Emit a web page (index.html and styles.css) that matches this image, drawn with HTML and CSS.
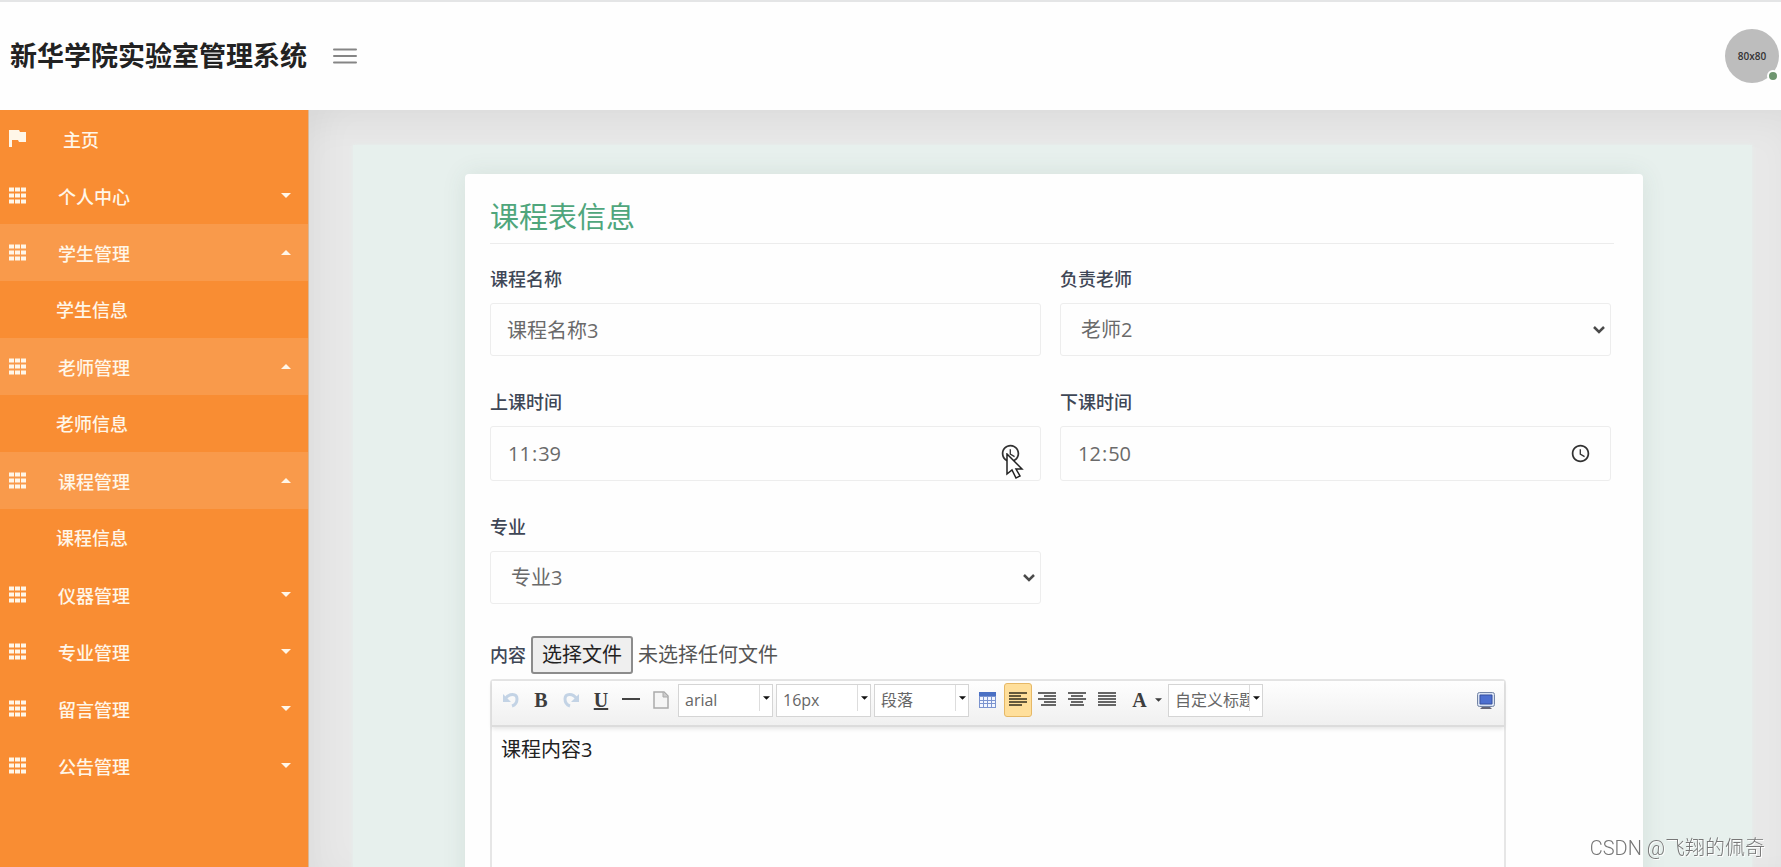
FILE: index.html
```html
<!DOCTYPE html>
<html lang="zh-CN">
<head>
<meta charset="utf-8">
<title>新华学院实验室管理系统</title>
<link rel="stylesheet" href="styles.css">
</head>
<body>
<svg class="sprite" aria-hidden="true">
  <symbol id="grid" viewBox="0 0 17 16"><path d="M0 0h5v4H0zM6 0h5v4H6zM12 0h5v4h-5zM0 6h5v4H0zM6 6h5v4H6zM12 6h5v4h-5zM0 12h5v4H0zM6 12h5v4H6zM12 12h5v4h-5z" fill="currentColor"/></symbol>
  <symbol id="flag" viewBox="0 0 17 17"><path d="M0 0h10l1 2h6v10h-7l-1-2H3v7H0z" fill="currentColor"/></symbol>
  <symbol id="down" viewBox="0 0 10 5"><path d="M0 0h10L5 5z" fill="currentColor"/></symbol>
  <symbol id="up" viewBox="0 0 10 5"><path d="M0 5h10L5 0z" fill="currentColor"/></symbol>
  <symbol id="chevron" viewBox="0 0 12 8"><path d="M1 1l5 5 5-5" fill="none" stroke="currentColor" stroke-width="2.500"/></symbol>
</svg>
<header class="header">
  <h1 class="brand">新华学院实验室管理系统</h1>
  <button class="menu-toggle" aria-label="菜单"><svg width="24" height="16" viewBox="0 0 24 16"><path d="M1 1.500h22M1 8h22M1 14.500h22" stroke="#858585" stroke-width="2" stroke-linecap="round"/></svg></button>
  <div class="avatar">80x80<span class="status"></span></div>
</header>
<div class="layout">
  <nav class="sidebar">
    <a class="item home" href="#"><svg class="icon"><use href="#flag"/></svg><span class="name">主页</span></a>
    <a class="item" href="#"><svg class="icon"><use href="#grid"/></svg><span class="name">个人中心</span><svg class="caret"><use href="#down"/></svg></a>
    <a class="item open" href="#"><svg class="icon"><use href="#grid"/></svg><span class="name">学生管理</span><svg class="caret"><use href="#up"/></svg></a>
    <a class="item sub" href="#">学生信息</a>
    <a class="item open" href="#"><svg class="icon"><use href="#grid"/></svg><span class="name">老师管理</span><svg class="caret"><use href="#up"/></svg></a>
    <a class="item sub" href="#">老师信息</a>
    <a class="item open" href="#"><svg class="icon"><use href="#grid"/></svg><span class="name">课程管理</span><svg class="caret"><use href="#up"/></svg></a>
    <a class="item sub" href="#">课程信息</a>
    <a class="item" href="#"><svg class="icon"><use href="#grid"/></svg><span class="name">仪器管理</span><svg class="caret"><use href="#down"/></svg></a>
    <a class="item" href="#"><svg class="icon"><use href="#grid"/></svg><span class="name">专业管理</span><svg class="caret"><use href="#down"/></svg></a>
    <a class="item" href="#"><svg class="icon"><use href="#grid"/></svg><span class="name">留言管理</span><svg class="caret"><use href="#down"/></svg></a>
    <a class="item" href="#"><svg class="icon"><use href="#grid"/></svg><span class="name">公告管理</span><svg class="caret"><use href="#down"/></svg></a>
  </nav>
  <main class="content">
    <div class="panel">
      <form class="card">
        <h2 class="card-title">课程表信息</h2>
        <div class="fields">
          <div class="field"><label for="kcmc">课程名称</label><input class="control" id="kcmc" type="text" value="课程名称3"></div>
          <div class="field"><label for="fzls">负责老师</label>
            <div class="box"><select class="control select" id="fzls"><option>老师2</option></select><svg class="chevron"><use href="#chevron"/></svg></div>
          </div>
          <div class="field"><label for="sksj">上课时间</label>
            <div class="box"><input class="control time" id="sksj" type="time" value="11:39">
              <svg class="pointer" width="18" height="26" viewBox="0 0 18 26"><path d="M1 1v20l5-4 4 8 4-2-4-7h6z" fill="#fff" stroke="#222" stroke-width="1.500"/></svg></div>
          </div>
          <div class="field"><label for="xksj">下课时间</label><input class="control time" id="xksj" type="time" value="12:50"></div>
          <div class="field"><label for="zy">专业</label>
            <div class="box"><select class="control select" id="zy"><option>专业3</option></select><svg class="chevron"><use href="#chevron"/></svg></div>
          </div>
        </div>
        <div class="file-row">
          <span class="file-title">内容</span>
          <input class="file-input" id="file" type="file">
          <label class="file-button" for="file">选择文件</label>
          <span class="file-state">未选择任何文件</span>
        </div>
        <div class="editor">
          <div class="toolbar">
            <button type="button" class="tool" aria-label="撤销"><svg width="18" height="18" viewBox="0 0 18 18" fill="none" stroke="#c3d3e5"><path d="M3 8c4-6 12-6 12 0 0 4-2 6-5 7" stroke-width="3"/><path d="M1 3v8h8z" fill="#c3d3e5" stroke="none"/></svg></button>
            <button type="button" class="tool letter">B</button>
            <button type="button" class="tool" aria-label="重做"><svg width="18" height="18" viewBox="0 0 18 18" fill="none" stroke="#c3d3e5"><path d="M15 8C11 2 3 2 3 8c0 4 2 6 5 7" stroke-width="3"/><path d="M17 3v8H9z" fill="#c3d3e5" stroke="none"/></svg></button>
            <button type="button" class="tool letter underline">U</button>
            <button type="button" class="tool" aria-label="分隔线"><svg width="18" height="18"><path d="M0 8h18" stroke="#444" stroke-width="2"/></svg></button>
            <button type="button" class="tool" aria-label="清空文档"><svg width="18" height="20" viewBox="0 0 18 20"><path d="M2 2h10l4 4v12H2z" fill="#f5f5f5" stroke="#aaa" stroke-width="1.500"/><path d="M11 2v5h5" fill="#ccc" stroke="#aaa"/></svg></button>
            <span class="combo"><select aria-label="字体"><option>arial</option></select><span class="drop"><svg class="arrow"><use href="#down"/></svg></span></span>
            <span class="combo"><select aria-label="字号"><option>16px</option></select><span class="drop"><svg class="arrow"><use href="#down"/></svg></span></span>
            <span class="combo"><select aria-label="段落格式"><option>段落</option></select><span class="drop"><svg class="arrow"><use href="#down"/></svg></span></span>
            <button type="button" class="tool wide" aria-label="表格"><svg width="17" height="16" viewBox="0 0 17 16"><path d="M0 0h17v16H0z" fill="#7b94cf"/><path d="M0 0h17v4H0z" fill="#4a70c4"/><path d="M1 5h3v3H1zM5 5h3v3H5zM9 5h3v3H9zM13 5h3v3h-3zM1 9h3v2H1zM5 9h3v2H5zM9 9h3v2H9zM13 9h3v2h-3zM1 12h3v3H1zM5 12h3v3H5zM9 12h3v3H9zM13 12h3v3h-3z" fill="#f2f6ff"/></svg></button>
            <button type="button" class="tool active" aria-label="居左对齐"><svg width="18" height="16"><path d="M0 1h18M0 4h12M0 7h18M0 10h18M0 13h13" stroke="#665a3c" stroke-width="2"/></svg></button>
            <button type="button" class="tool" aria-label="居右对齐"><svg width="18" height="16"><path d="M0 1h18M6 4h12M0 7h18M6 10h12M3 13h15" stroke="#666" stroke-width="2"/></svg></button>
            <button type="button" class="tool" aria-label="居中对齐"><svg width="18" height="16"><path d="M0 1h18M3 4h12M0 7h18M3 10h12M2 13h14" stroke="#666" stroke-width="2"/></svg></button>
            <button type="button" class="tool" aria-label="两端对齐"><svg width="18" height="16"><path d="M0 1h18M0 4h18M0 7h18M0 10h18M0 13h18" stroke="#666" stroke-width="2"/></svg></button>
            <button type="button" class="tool letter color">A<svg class="arrow"><use href="#down"/></svg></button>
            <span class="combo"><select aria-label="自定义标题"><option>自定义标题</option></select><span class="drop"><svg class="arrow"><use href="#down"/></svg></span></span>
            <button type="button" class="tool fullscreen" aria-label="全屏"><svg width="18" height="17" viewBox="0 0 18 17"><rect x=".5" y=".5" width="17" height="14" rx="2" fill="#d9e2f2" stroke="#7485a5"/><path d="M3 3h12v9H3z" fill="#4d6fd0" stroke="#3650a0"/><path d="M5 15h8l2 2H3z" fill="#667"/></svg></button>
          </div>
          <div class="document" contenteditable="true">课程内容3</div>
        </div>
      </form>
    </div>
  </main>
</div>
<div class="watermark">CSDN @飞翔的佩奇</div>
</body>
</html>
```
FILE: styles.css
```css
* { box-sizing: border-box; }
body {
  margin: 0;
  height: 100vh;
  display: flex;
  flex-direction: column;
  overflow: hidden;
  background: #e8e8e8;
  color: #555;
  font: 20px/30px "Open Sans", "Noto Sans CJK SC", sans-serif;
}
button, input, select { font: inherit; color: inherit; }
.sprite { display: none; }

.header {
  position: relative;
  z-index: 2;
  flex: none;
  display: flex;
  align-items: center;
  height: 110px;
  padding: 0 2px 0 10px;
  border-top: 2px solid #e4e5e6;
  background: #fefefe;
}
.brand { margin: 0; color: #222; font-size: 27px; line-height: 40px; font-weight: 700; }
.menu-toggle { display: flex; margin-left: 26px; padding: 0; border: 0; background: none; }
.avatar {
  position: relative;
  display: flex;
  align-items: center;
  justify-content: center;
  width: 54px;
  height: 54px;
  margin-left: auto;
  border-radius: 50%;
  background: #bdbdbd;
  color: #333;
  font-size: 10px;
  font-weight: 600;
}
.status {
  position: absolute;
  right: 0;
  bottom: 1px;
  width: 12px;
  height: 12px;
  border: 2px solid #fff;
  border-radius: 50%;
  background: #6f9670;
}

.layout { flex: 1; display: flex; min-height: 0; }
.sidebar { flex: none; width: 309px; background: #f98d33; border-right: 1px solid #d9b797; }
.item {
  display: flex;
  align-items: center;
  height: 57px;
  padding: 0 17px 0 9px;
  color: #fff6e8;
  font-size: 18px;
  font-weight: 500;
  text-decoration: none;
}
.open { background: #f99a4b; }
.sub { padding-left: 56px; }
.icon { width: 17px; height: 17px; margin-right: 32px; }
.home .icon { margin-right: 37px; }
.name { padding-top: 3px; }
.caret { width: 10px; height: 5px; margin-left: auto; }

.content {
  flex: 1;
  min-width: 0;
  padding: 35px 29px 0 44px;
  overflow: hidden;
  box-shadow: inset 0 24px 32px -8px rgba(0, 0, 0, .04), inset 24px 0 32px -8px rgba(0, 0, 0, .03);
}
.panel { min-height: 100%; padding: 29px 109px 0 112px; background: #e7f0ed; box-shadow: 0 0 4px #e7f0ed; }
.card {
  padding: 21px 29px 30px 25px;
  border-radius: 4px;
  background: #fefefe;
  box-shadow: 0 0 24px rgba(60, 100, 80, .1);
}
.card-title {
  margin: 0;
  padding-bottom: 4px;
  border-bottom: 1px solid #ececec;
  color: #4fa67c;
  font-size: 29px;
  line-height: 44px;
  font-weight: 400;
}
.fields { display: grid; grid-template-columns: 1fr 1fr; gap: 31px 19px; padding: 20px 3px 0 0; }
.field > label, .file-title { color: #3f4756; font-size: 18px; font-weight: 500; }
.field > label { display: block; margin-bottom: 9px; }
.control {
  display: block;
  width: 100%;
  height: 53px;
  padding: 0 16px;
  border: 1px solid #ededed;
  border-radius: 3px;
  background: #fefefe;
  color: #6a6a6a;
  outline: 0;
}
.select { appearance: none; padding: 0 20px; }
.box { position: relative; }
.chevron { position: absolute; right: 6px; top: 23px; width: 12px; height: 8px; color: #4a4a4a; pointer-events: none; }
.time { height: 55px; }
.time::-webkit-datetime-edit-ampm-field { display: none; }
.time::-webkit-calendar-picker-indicator { opacity: .8; }
.pointer { position: absolute; right: 17px; top: 27px; }
.file-row { display: flex; align-items: center; height: 38px; margin: 32px 0 5px; }
.file-input { position: absolute; width: 1px; height: 1px; opacity: 0; }
.file-button {
  margin: 0 5px;
  padding: 2px 9px;
  border: 2px solid #8c8c8c;
  border-radius: 3px;
  background: #efefef;
  color: #222;
}

.editor { width: 1016px; max-width: 100%; border: 2px solid #e6e6e6; border-radius: 4px; }
.toolbar {
  display: flex;
  align-items: center;
  height: 46px;
  padding: 0 9px 6px 4px;
  border-bottom: 2px solid #dcdcdc;
  background: linear-gradient(#fefefe, #f0f0f0);
  box-shadow: 0 2px 4px rgba(0, 0, 0, .1);
}
.tool {
  display: flex;
  align-items: center;
  justify-content: center;
  flex: none;
  width: 30px;
  height: 34px;
  padding: 0;
  border: 0;
  background: none;
}
.letter { color: #3d3d3d; font-family: "Liberation Serif", serif; font-weight: 700; }
.underline { text-decoration: underline; }
.wide { width: 34px; }
.active { width: 28px; border: 1px solid #e6b866; border-radius: 3px; background: #ffdf9b; }
.color { width: 44px; gap: 8px; padding-left: 6px; }
.combo { display: flex; flex: none; width: 95px; height: 33px; margin: 0 1px 0 2px; border: 1px solid #d5d5d5; background: #fff; }
.combo select {
  appearance: none;
  flex: 1;
  min-width: 0;
  padding: 0 0 4px 6px;
  border: 0;
  background: none;
  color: #666;
  font-size: 16px;
}
.drop { display: flex; align-items: center; justify-content: center; width: 13px; height: 26px; border-left: 1px solid #ddd; color: #111; }
.arrow { width: 7px; height: 4px; }
.fullscreen { margin-left: auto; width: 18px; }
.document { min-height: 320px; padding: 8px 9px; color: #222; outline: 0; }

.watermark { position: fixed; right: 16px; bottom: 4px; z-index: 3; color: #777; text-shadow: 1px 1px #fff; font-family: Roboto, "Noto Sans CJK SC", sans-serif; font-weight: 300; }
```
